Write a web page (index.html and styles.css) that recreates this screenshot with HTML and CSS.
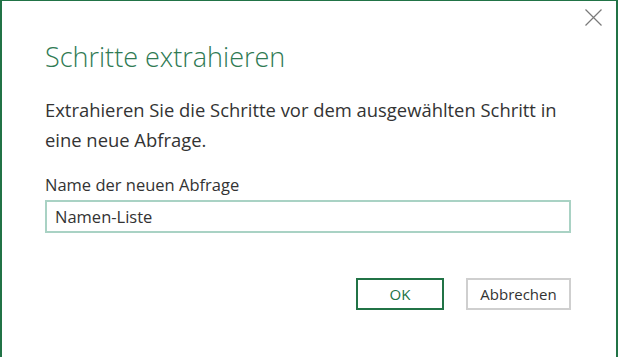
FILE: index.html
```html
<!DOCTYPE html>
<html lang="de">
<head>
    <meta charset="UTF-8">
    <meta name="viewport" content="width=device-width, initial-scale=1.0">
    <title>Schritte extrahieren</title>
    <link rel="stylesheet" href="styles.css">
</head>
<body>
<div class="dialog">
    <div class="titlebar">
        <button class="close" type="button" aria-label="Schließen">
            <svg width="17" height="17" viewBox="0 0 17 17">
                <path d="M0.5 0.5 L16.5 16.5 M16.5 0.5 L0.5 16.5" stroke="#7a7a7a" stroke-width="1.2" fill="none"/>
            </svg>
        </button>
    </div>
    <div class="content">
        <h1 class="title">Schritte extrahieren</h1>
        <p class="text">Extrahieren Sie die Schritte vor dem ausgewählten Schritt in eine neue Abfrage.</p>
        <label class="label" for="query_name">Name der neuen Abfrage</label>
        <input class="field" type="text" id="query_name" value="Namen-Liste">
        <div class="buttons">
            <button class="btn btn-primary" type="button">OK</button>
            <button class="btn" type="button">Abbrechen</button>
        </div>
    </div>
</div>
</body>
</html>
```

FILE: styles.css
```css
body {
    margin: 0;
    font-family: "Open Sans", "Noto Sans", sans-serif;
    background: #fff;
}
.dialog {
    box-sizing: border-box;
    height: 357px;
    border: 2px solid #217346;
    border-top-width: 1px;
    border-bottom: none;
}
.titlebar {
    display: flex;
    justify-content: flex-end;
    padding: 8px 14px 0 0;
}
.close {
    background: none;
    border: none;
    padding: 0;
    width: 17px;
    height: 17px;
    display: block;
}
.close svg {
    display: block;
}
.content {
    padding: 0 45px 0 43px;
}
.title {
    margin: 12px 0 0;
    font-size: 27px;
    font-weight: 300;
    line-height: 38px;
    color: #2f7a53;
}
.text {
    margin: 19px 0 0;
    font-size: 18.4px;
    line-height: 30px;
    color: #333;
}
.label {
    display: block;
    margin-top: 19px;
    font-size: 16.5px;
    line-height: 22px;
    color: #333;
}
.field {
    display: block;
    box-sizing: border-box;
    width: 100%;
    height: 33px;
    margin-top: 4px;
    padding: 0 8px;
    border: 2px solid #a9d2c4;
    font-family: inherit;
    font-size: 16.5px;
    color: #333;
    outline: none;
}
.buttons {
    display: flex;
    justify-content: flex-end;
    gap: 22px;
    margin-top: 45px;
}
.btn {
    box-sizing: border-box;
    height: 32px;
    width: 105px;
    background: #fff;
    border: 2px solid #cfcfcf;
    font-family: inherit;
    font-size: 15px;
    color: #333;
    padding: 0;
}
.btn-primary {
    width: 88px;
    border-color: #217346;
    color: #217346;
}
```
